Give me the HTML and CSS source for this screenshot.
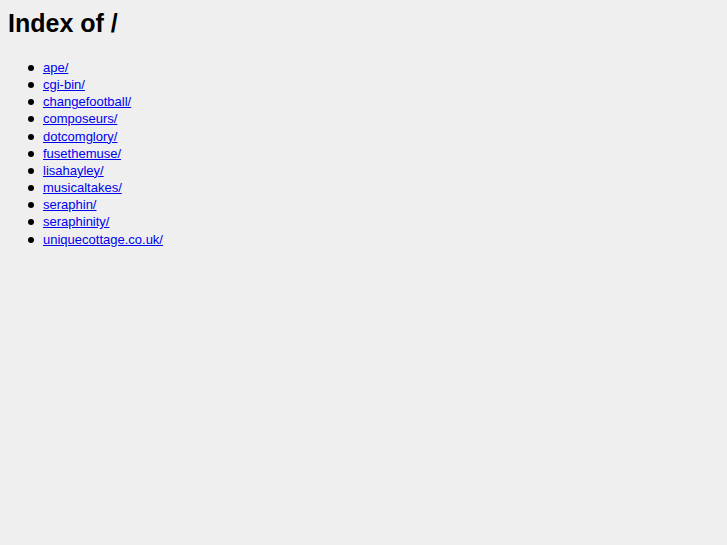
FILE: index.html
```html
<!DOCTYPE html>
<html lang="en">
<head>
  <meta charset="UTF-8">
  <title>Index of /</title>
  <link rel="stylesheet" href="styles.css">
</head>
<body>
  <h1>Index of /</h1>
  <ul class="listing">
    <li><a href="ape/">ape/</a></li>
    <li><a href="cgi-bin/">cgi-bin/</a></li>
    <li><a href="changefootball/">changefootball/</a></li>
    <li><a href="composeurs/">composeurs/</a></li>
    <li><a href="dotcomglory/">dotcomglory/</a></li>
    <li><a href="fusethemuse/">fusethemuse/</a></li>
    <li><a href="lisahayley/">lisahayley/</a></li>
    <li><a href="musicaltakes/">musicaltakes/</a></li>
    <li><a href="seraphin/">seraphin/</a></li>
    <li><a href="seraphinity/">seraphinity/</a></li>
    <li><a href="uniquecottage.co.uk/">uniquecottage.co.uk/</a></li>
  </ul>
</body>
</html>
```

FILE: styles.css
```css
body {
  font-family: "Liberation Sans", Arial, sans-serif;
  font-size: 13px;
  margin: 8px;
  background-color: #efefef;
  color: #000;
}

h1 {
  font-size: 25px;
  line-height: 30px;
  margin: 0 0 21px;
}

.listing {
  margin: 0;
  padding-left: 35px;
  list-style: none;
  line-height: 1.32;
}

.listing li::before {
  content: "";
  display: inline-block;
  width: 6px;
  height: 6px;
  border-radius: 50%;
  background-color: #000;
  margin-left: -15px;
  margin-right: 9px;
  vertical-align: 1px;
}

.listing a {
  color: #0000ee;
}
```
